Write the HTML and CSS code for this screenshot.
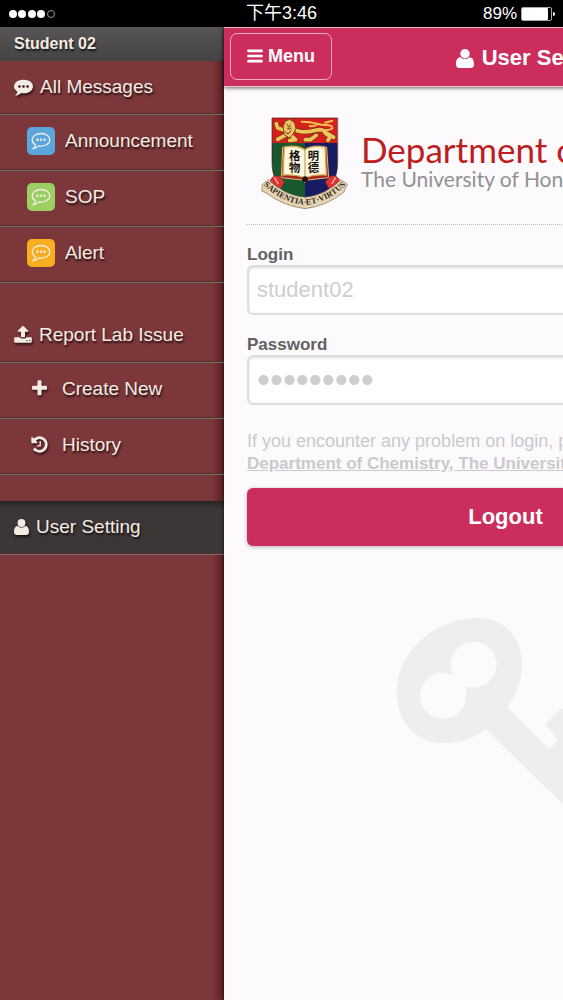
FILE: index.html
```html
<!DOCTYPE html>
<html lang="en">
<head>
    <meta charset="UTF-8">
    <meta name="viewport" content="width=device-width, initial-scale=1.0">
    <title>User Setting</title>
    <link rel="stylesheet" href="styles.css">
</head>
<body>
    <svg class="symbols" aria-hidden="true">
        <symbol id="icon-user" viewBox="0 0 18 19"><path d="M4.600 8.200C1.500 8.200 0 11 0 15.500C0 18 1.500 19 3.500 19H14.500C16.500 19 18 18 18 15.500C18 11 16.500 8.200 13.400 8.200C11 10.700 7 10.700 4.600 8.200Z"/><circle cx="9" cy="4.700" r="4.700"/></symbol>
        <symbol id="icon-bars" viewBox="128 0 1536 1792"><path d="M1664 1344v128q0 26-19 45t-45 19h-1408q-26 0-45-19t-19-45v-128q0-26 19-45t45-19h1408q26 0 45 19t19 45zm0-512v128q0 26-19 45t-45 19h-1408q-26 0-45-19t-19-45v-128q0-26 19-45t45-19h1408q26 0 45 19t19 45zm0-512v128q0 26-19 45t-45 19h-1408q-26 0-45-19t-19-45v-128q0-26 19-45t45-19h1408q26 0 45 19t19 45z"/></symbol>
        <symbol id="icon-chat" viewBox="0 0 1792 1792"><path d="M640 896q0-53-37.5-90.5t-90.5-37.5-90.5 37.5-37.5 90.5 37.5 90.5 90.5 37.5 90.5-37.5 37.5-90.5zm384 0q0-53-37.5-90.5t-90.5-37.5-90.5 37.5-37.5 90.5 37.5 90.5 90.5 37.5 90.5-37.5 37.5-90.5zm384 0q0-53-37.5-90.5t-90.5-37.5-90.5 37.5-37.5 90.5 37.5 90.5 90.5 37.5 90.5-37.5 37.5-90.5zm384 0q0 174-120 321.5t-326 233-450 85.5q-110 0-211-18-173 173-435 229-52 10-86 13-12 1-22-6t-13-18q-4-15 20-37 5-5 23.5-21.5t25.5-23.5 23.5-25.5 24-31.5 20.5-37 20-48 14.5-57.5 12.5-72.5q-146-90-229.5-216.5t-83.5-269.5q0-174 120-321.5t326-233 450-85.5 450 85.5 326 233 120 321.5z"/></symbol>
        <symbol id="icon-chat-line" viewBox="0 0 20 20"><path d="M10 2.5c-5 0-8.8 2.8-8.8 6.3 0 2.1 1.300 3.900 3.300 5-.3 1.600-.9 2.700-2.200 3.800 2.300-.3 4-1.200 5.400-2.700 6.100.9 11.100-2 11.100-6.100 0-3.500-3.800-6.300-8.800-6.300z" fill="none" stroke="currentColor" stroke-width="1.300"/><circle cx="6.500" cy="8.800" r="1.200"/><circle cx="10" cy="8.800" r="1.200"/><circle cx="13.500" cy="8.800" r="1.200"/></symbol>
        <symbol id="icon-upload" viewBox="64 0 1664 1792"><path d="M1344 1472q0-26-19-45t-45-19-45 19-19 45 19 45 45 19 45-19 19-45zm256 0q0-26-19-45t-45-19-45 19-19 45 19 45 45 19 45-19 19-45zm128-224v320q0 40-28 68t-68 28h-1472q-40 0-68-28t-28-68v-320q0-40 28-68t68-28h427q21 56 70.500 92t110.500 36h256q61 0 110.500-36t70.500-92h427q40 0 68 28t28 68zm-325-648q-17 40-59 40h-256v448q0 26-19 45t-45 19h-256q-26 0-45-19t-19-45v-448h-256q-42 0-59-40-17-39 14-69l448-448q18-19 45-19t45 19l448 448q31 30 14 69z"/></symbol>
        <symbol id="icon-plus" viewBox="192 0 1408 1792"><path d="M1600 736v192q0 40-28 68t-68 28h-416v416q0 40-28 68t-68 28h-192q-40 0-68-28t-28-68v-416h-416q-40 0-68-28t-28-68v-192q0-40 28-68t68-28h416v-416q0-40 28-68t68-28h192q40 0 68 28t28 68v416h416q40 0 68 28t28 68z"/></symbol>
        <symbol id="icon-history" viewBox="128 0 1536 1792"><path d="M1664 896q0 156-61 298t-164 245-245 164-298 61q-172 0-327-72.500t-264-204.500q-7-10-6.500-22.500t8.500-20.500l137-138q10-9 25-9 16 2 23 12 73 95 179 147t225 52q104 0 198.500-40.500t163.500-109.500 109.500-163.500 40.500-198.500-40.500-198.500-109.500-163.500-163.500-109.500-198.500-40.500q-98 0-188 35.500t-160 101.500l137 138q31 30 14 69-17 40-59 40h-448q-26 0-45-19t-19-45v-448q0-42 40-59 39-17 69 14l130 129q107-101 244.500-156.500t284.500-55.500q156 0 298 61t245 164 164 245 61 298zm-640-288v448q0 14-9 23t-23 9h-320q-14 0-23-9t-9-23v-64q0-14 9-23t23-9h224v-352q0-14 9-23t23-9h64q14 0 23 9t9 23z"/></symbol>
    </svg>

    <div class="status-bar">
        <svg class="signal" viewBox="0 0 48 10" aria-hidden="true">
            <circle cx="5" cy="5" r="4"/>
            <circle cx="14" cy="5" r="4"/>
            <circle cx="24" cy="5" r="4"/>
            <circle cx="33" cy="5" r="4"/>
            <circle cx="43" cy="5" r="3.500" fill="none" stroke="#999"/>
        </svg>
        <span class="clock">下午3:46</span>
        <span class="battery">89%
            <svg viewBox="0 0 34 14" aria-hidden="true">
                <rect x="0.500" y="0.500" width="30" height="13" rx="1.500" fill="none" stroke="#aaa"/>
                <rect x="1" y="1" width="26" height="12" rx="1"/>
                <path d="M32 5q2 0 2 2t-2 2z"/>
            </svg>
        </span>
    </div>

    <div class="app">
        <nav class="sidebar">
            <div class="account">Student 02</div>
            <a class="item" href="#messages"><svg class="icon wide"><use href="#icon-chat"/></svg>All Messages</a>
            <a class="item sub" href="#announcement"><span class="tile blue"><svg><use href="#icon-chat-line"/></svg></span>Announcement</a>
            <a class="item sub" href="#sop"><span class="tile green"><svg><use href="#icon-chat-line"/></svg></span>SOP</a>
            <a class="item sub" href="#alert"><span class="tile orange"><svg><use href="#icon-chat-line"/></svg></span>Alert</a>
            <div class="spacer"></div>
            <a class="item" href="#report"><svg class="icon upload"><use href="#icon-upload"/></svg>Report Lab Issue</a>
            <a class="item sub action" href="#create"><svg class="icon"><use href="#icon-plus"/></svg>Create New</a>
            <a class="item sub action" href="#history"><svg class="icon"><use href="#icon-history"/></svg>History</a>
            <div class="spacer"></div>
            <a class="item current" href="#setting"><svg class="icon user"><use href="#icon-user"/></svg>User Setting</a>
        </nav>

        <main class="page">
            <header class="header">
                <button class="menu" type="button"><svg><use href="#icon-bars"/></svg>Menu</button>
                <h1><svg><use href="#icon-user"/></svg>User Setting</h1>
            </header>

            <div class="content">
                <div class="brand">
                    <svg class="crest" viewBox="0 0 300 315" role="img" aria-label="University crest">
                        <defs>
                            <clipPath id="shield"><path d="M51 24H248V155C248 215 218 260 150 283C82 260 51 215 51 155Z"/></clipPath>
                            <path id="motto" d="M30 229Q82 278 150 285Q218 278 268 229"/>
                        </defs>
                        <g clip-path="url(#shield)">
                            <path d="M51 98H150V290H51Z" fill="#19582f"/>
                            <path d="M150 98H250V290H150Z" fill="#171b63"/>
                            <path d="M51 24H248V99H51Z" fill="#d71f1d"/>
                        </g>
                        <path d="M51 24H248V155C248 215 218 260 150 283C82 260 51 215 51 155Z" fill="none" stroke="#42151a" stroke-width="2"/>
                        <!-- lion -->
                        <g fill="none" stroke="#6d3a12" stroke-width="15" stroke-linecap="round" stroke-linejoin="round">
                            <path d="M86 60L68 54L64 41M90 76L68 88M108 76L122 89L104 91M126 62Q155 70 181 61Q207 54 211 70L226 80L219 91M184 76L166 89L151 89M210 66L236 82"/>
                        </g>
                        <g fill="none" stroke="#f0c45c" stroke-width="11" stroke-linecap="round" stroke-linejoin="round">
                            <path d="M86 60L68 54L64 41M90 76L68 88M108 76L122 89L104 91M126 62Q155 70 181 61Q207 54 211 70L226 80L219 91M184 76L166 89L151 89M210 66L236 82"/>
                        </g>
                        <path d="M207 60C244 62 236 43 211 45C190 47 181 34 140 35M188 42Q180 50 164 48M210 38L232 32" fill="none" stroke="#efbf52" stroke-width="6" stroke-linecap="round"/>
                        <path d="M84 50L91 33L104 28L119 38L123 56L114 73L103 84L88 74Z" fill="#efc363" stroke="#76451a" stroke-width="3"/>
                        <path d="M95 43l5 3m8-2l-4 3m-7 8q6 5 12-1M98 50l8 1M91 65l8 7 10-10" fill="none" stroke="#5b321d" stroke-width="3"/>
                        <!-- book -->
                        <path d="M83 112L146 116L149 122L153 115L215 112L221 203L158 210L150 218L142 210L79 203Z" fill="#a72522" stroke="#e3bb68" stroke-width="3"/>
                        <path d="M88 111Q131 104 149 120Q169 104 210 111L214 195Q171 193 150 205Q128 193 84 195Z" fill="#fff8df" stroke="#d4a550" stroke-width="4"/>
                        <path d="M150 119V204" stroke="#b4934c" stroke-width="3"/>
                        <circle cx="150" cy="208" r="9" fill="#26120f"/>
                        <g class="book-text">
                            <text x="102" y="151">格</text>
                            <text x="102" y="185">物</text>
                            <text x="158" y="151">明</text>
                            <text x="158" y="185">德</text>
                        </g>
                        <!-- ribbon -->
                        <path d="M47 209Q58 190 76 201L88 216L78 234L46 228ZM253 209Q241 190 223 201L211 216L221 234L252 228Z" fill="#df3330" stroke="#842c2b" stroke-width="2"/>
                        <path d="M58 202l12 20M242 202l-12 20" stroke="#ffb8a8" stroke-width="4"/>
                        <path d="M22 224L40 209Q88 256 150 262Q211 256 258 209L277 223L266 247Q215 288 150 296Q81 287 33 248L20 243Z" fill="#e5d5b2" stroke="#806b55" stroke-width="2"/>
                        <text class="motto"><textPath href="#motto" startOffset="50%">SAPIENTIA·ET·VIRTUS</textPath></text>
                    </svg>
                    <div class="brand-text">
                        <h2>Department of Chemistry</h2>
                        <p>The University of Hong Kong</p>
                    </div>
                </div>

                <form class="login">
                    <label for="login">Login</label>
                    <input id="login" type="text" placeholder="student02">
                    <label for="password">Password</label>
                    <input id="password" type="password" value="password1">
                    <p class="help">If you encounter any problem on login, please contact<br><a href="#contact">Department of Chemistry, The University of Hong Kong</a></p>
                    <button class="logout" type="button">Logout</button>
                </form>

                <svg class="key" viewBox="397 618 230 240" aria-hidden="true">
                    <path fill-rule="evenodd" d="M397 692C397 653 433 618 478 618C505 618 522 638 522 664C522 680 516 696 507 707L549 749L558 740L545 724L562 708L627 773L603 797L585 781L576 790L613 828L588 853L563 804L486 729C475 738 461 743 443 743C414 743 397 721 397 692ZM420 696A23 23 0 0 0 466 696C467 692 466 689 465 686A23 23 0 1 0 453 675A23 23 0 0 0 420 696Z"/>
                </svg>
            </div>
        </main>
    </div>
</body>
</html>
```
FILE: styles.css
```css
* {
    box-sizing: border-box;
}
body {
    margin: 0;
    min-height: 100vh;
    display: flex;
    flex-direction: column;
    overflow: hidden;
    background: #fcfafd;
    font-family: "Liberation Sans", "Noto Sans CJK TC", sans-serif;
}
svg {
    display: block;
    flex: none;
    fill: currentColor;
}
h1, h2, p {
    margin: 0;
}
.symbols {
    position: absolute;
    width: 0;
    height: 0;
}

/* status bar */
.status-bar {
    display: grid;
    grid-template-columns: 1fr auto 1fr;
    align-items: center;
    height: 27px;
    padding: 0 8px;
    background: #000;
    color: #fff;
    font-size: 17px;
}
.signal {
    width: 48px;
    height: 10px;
}
.clock {
    font-size: 18px;
    line-height: 27px;
}
.battery {
    display: flex;
    align-items: center;
    justify-content: flex-end;
    gap: 4px;
}
.battery svg {
    width: 34px;
    height: 14px;
}

.app {
    flex: 1;
    display: flex;
}

/* sidebar */
.sidebar {
    flex: 0 0 224px;
    background: linear-gradient(to left, rgba(60, 10, 12, 0.5), transparent 12px), #7c373a;
    color: #f4ece4;
    font-size: 19px;
    text-shadow: 1px 2px 2px rgba(0, 0, 0, 0.7);
}
.account {
    height: 34px;
    padding-left: 14px;
    background: linear-gradient(#575556, #444243);
    font-size: 16px;
    font-weight: bold;
    line-height: 34px;
}
.item {
    display: flex;
    align-items: center;
    gap: 7px;
    height: 54px;
    padding: 0 0 2px 14px;
    border-bottom: 1px solid #777071;
    box-shadow: inset 0 -1px #552d2f;
    color: inherit;
    text-decoration: none;
}
.item.sub {
    height: 56px;
    padding: 0 0 4px 27px;
    gap: 10px;
}
.item.action {
    padding-left: 31px;
    gap: 14px;
}
.item.current {
    background: linear-gradient(#262323, #3c3637 8px);
}
.spacer {
    height: 26px;
}
.icon {
    width: 17px;
    height: 19px;
    filter: drop-shadow(1px 2px 1px rgba(0, 0, 0, 0.6));
}
.icon.wide {
    width: 19px;
}
.icon.upload {
    width: 18px;
}
.icon.user {
    width: 15px;
    height: 16px;
}
.tile {
    display: grid;
    place-items: center;
    width: 28px;
    height: 28px;
    border-radius: 5px;
}
.tile svg {
    width: 20px;
    height: 20px;
}
.blue {
    background: #5ba6dc;
}
.green {
    background: #9bce63;
}
.orange {
    background: #f7ae20;
}

/* page panel, pushed aside by the open menu */
.page {
    flex: 0 0 100%;
    background: #fcfafd;
    box-shadow: 0 0 4px rgba(0, 0, 0, 0.7);
}
.header {
    display: flex;
    align-items: center;
    height: 60px;
    padding: 2px 52px 0 6px;
    border-top: 1px solid #efb6c7;
    border-bottom: 1px solid #f1bfd0;
    background: #cb2d5c;
    box-shadow: 0 1px 4px rgba(0, 0, 0, 0.6);
    color: #fff;
}
.menu {
    display: flex;
    align-items: center;
    justify-content: center;
    gap: 5px;
    width: 102px;
    height: 47px;
    margin-bottom: 4px;
    border: 1px solid #f3a9c0;
    border-radius: 7px;
    background: none;
    color: inherit;
    font: bold 18px "Liberation Sans", sans-serif;
}
.menu svg {
    width: 16px;
    height: 18px;
}
.header h1 {
    flex: 1;
    display: flex;
    align-items: center;
    justify-content: center;
    gap: 8px;
    font-size: 22px;
}
.header h1 svg {
    width: 18px;
    height: 19px;
}
.content {
    padding: 23px 23px 0;
}
.brand {
    display: flex;
    gap: 6px;
    height: 115px;
    padding-left: 8px;
    border-bottom: 1px dotted #bbb;
}
.crest {
    width: 100px;
    height: 105px;
}
.book-text {
    fill: #16120e;
    font: bold 34px "Noto Sans CJK TC", sans-serif;
}
.motto {
    fill: #302821;
    font: bold 25px "Liberation Serif", serif;
    text-anchor: middle;
}
.brand-text {
    padding-top: 20px;
    font-family: Lato, sans-serif;
    white-space: nowrap;
}
.brand-text h2 {
    color: #bd1c20;
    font-size: 35px;
    font-weight: 400;
    line-height: 38px;
}
.brand-text p {
    color: #929292;
    font-size: 21px;
    line-height: 22px;
}

/* login form */
.login {
    display: flex;
    flex-direction: column;
    padding-top: 20px;
}
.login label {
    color: #626163;
    font-size: 17px;
    font-weight: bold;
    line-height: 20px;
}
.login input {
    height: 50px;
    margin-bottom: 20px;
    padding: 0 8px;
    border: 2px solid #dedce0;
    border-radius: 6px;
    background: #fff;
    box-shadow: inset 0 1px 3px rgba(0, 0, 0, 0.15);
    color: #cfcdd0;
    font: 22px "Liberation Sans", sans-serif;
}
.login input::placeholder {
    color: #cfcdd0;
}
.login input[type="password"] {
    font-size: 37px;
}
.help {
    padding-top: 5px;
    color: #cbc9cc;
    font-size: 18px;
    line-height: 22px;
}
.help a {
    color: inherit;
    font-size: 17px;
    font-weight: bold;
}
.logout {
    height: 58px;
    margin-top: 13px;
    border: 0;
    border-radius: 6px;
    background: #cb2d5c;
    box-shadow: 0 1px 4px rgba(0, 0, 0, 0.3);
    color: #fff;
    font: bold 22px "Liberation Sans", sans-serif;
}
.key {
    width: 230px;
    height: 240px;
    margin: 72px 0 0 150px;
    color: #efedf0;
}
```
